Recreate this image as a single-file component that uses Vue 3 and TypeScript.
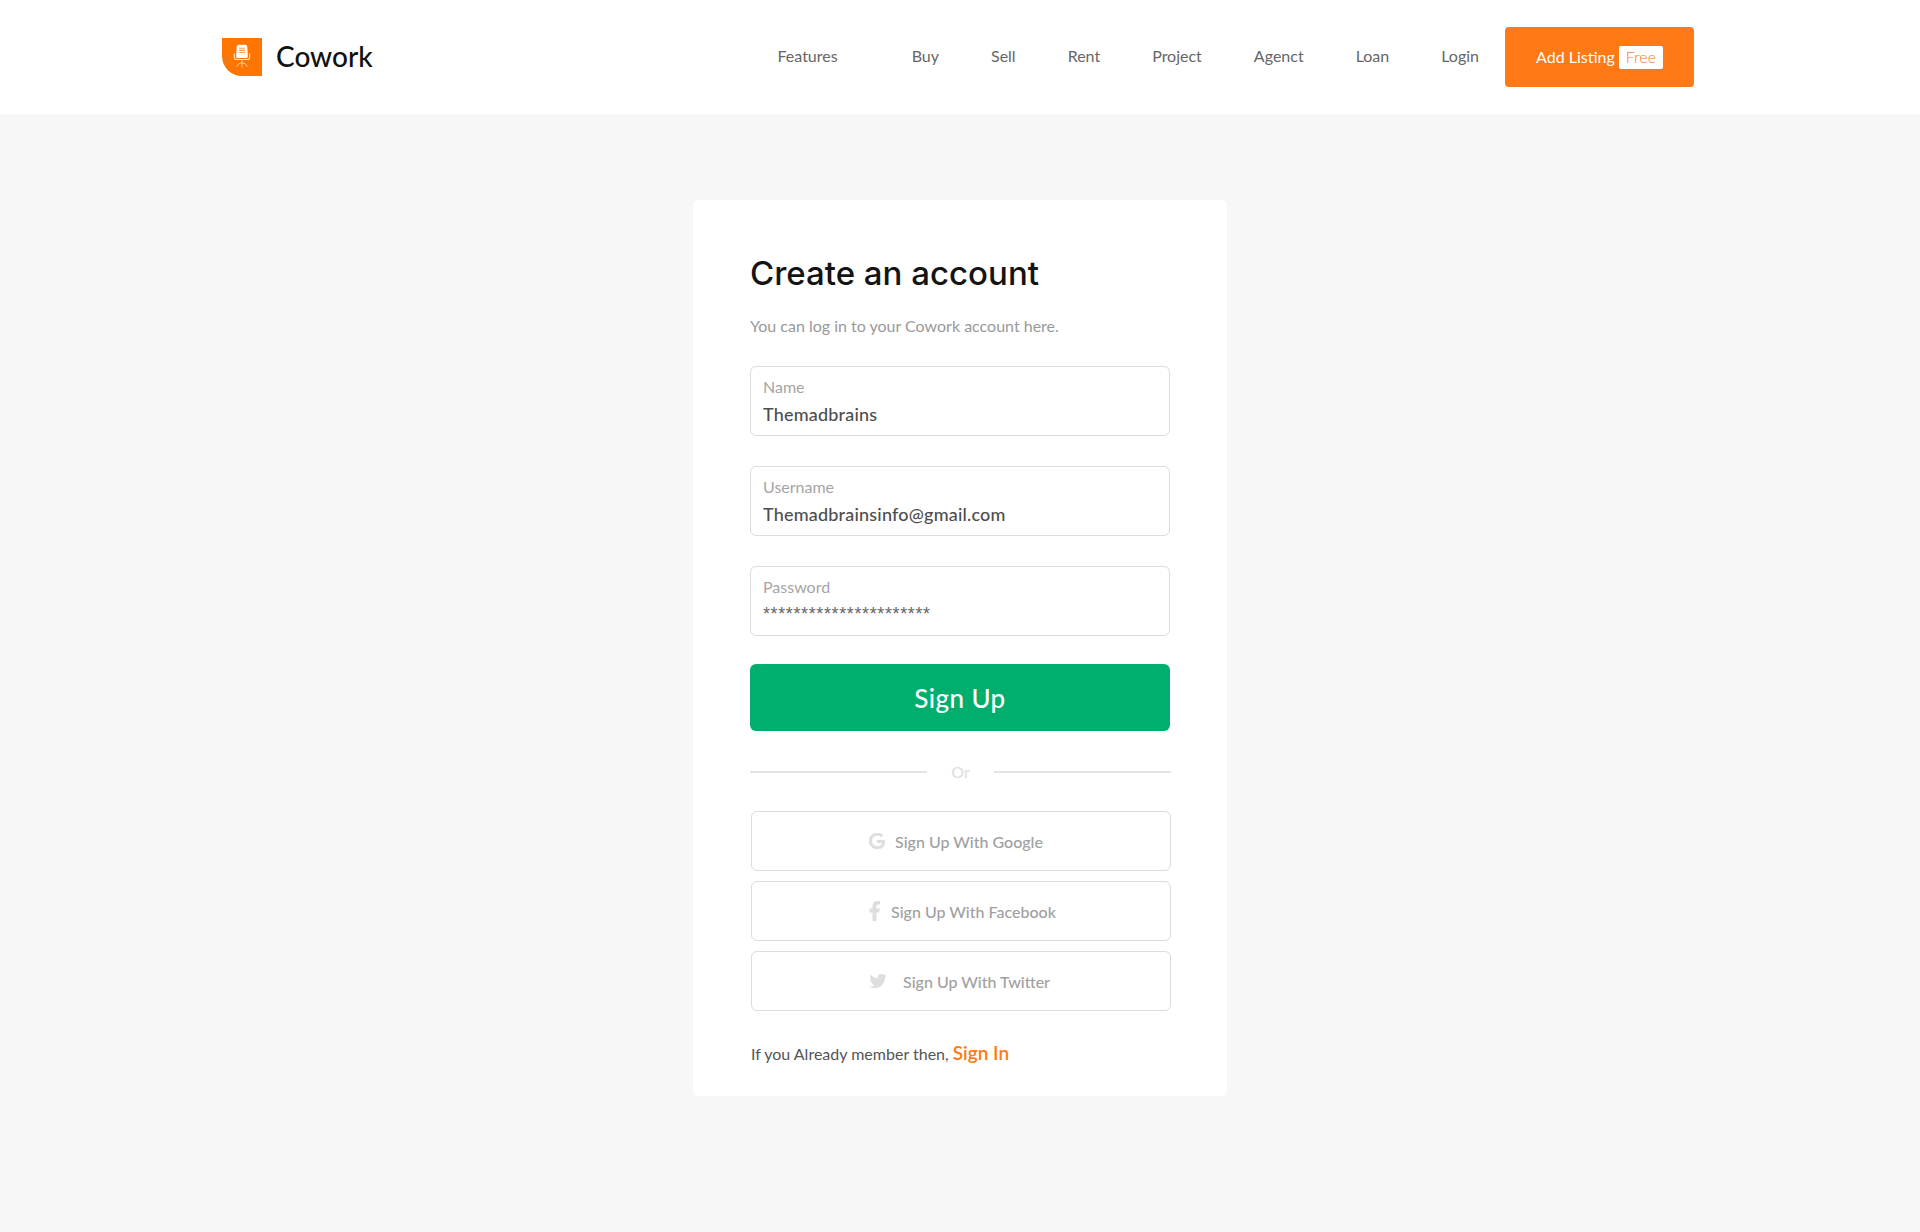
<template>
  <div class="page">
    <header class="topbar">
      <a class="brand" href="#">
        <span class="brand-mark">
          <svg width="18" height="26" viewBox="0 0 20 28" fill="none">
            <path d="M6.5 0.5h7c1.4 0 2.3 1 2.4 2.3l.6 10.700c.1 1-.6 1.700-1.600 1.700H5.100c-1 0-1.700-.7-1.600-1.700l.6-10.700C4.200 1.500 5.100.5 6.500.5z" fill="#fff" />
            <path d="M6.800 4.200h6.400M6.800 6.600h6.400M6.800 9h6.400" stroke="#ff9a4d" stroke-width="1.200" />
            <path d="M1.500 10v4.200c0 1.600 1 2.600 2.600 2.600h11.800c1.600 0 2.600-1 2.600-2.600V10" stroke="#fff" stroke-width="1.200" opacity=".85" />
            <path d="M10 17v3.500M10 20.500c-3 0-5 1.500-5.500 4.500M10 20.500c3 0 5 1.500 5.500 4.500M10 20.500V26" stroke="#fff" stroke-width="1" opacity=".7" />
          </svg>
        </span>
        <span class="brand-name">Cowork</span>
      </a>
      <nav class="menu">
        <a v-for="item in menu" :key="item" href="#" class="menu-link">{{ item }}</a>
      </nav>
      <a class="add-listing" href="#"><span class="add-text">Add Listing</span> <span class="free">Free</span></a>
    </header>

    <main class="content">
      <section class="card">
        <h1 class="title">Create an account</h1>
        <p class="lead">You can log in to your Cowork account here.</p>

        <form class="form" @submit.prevent>
          <label v-for="field in fields" :key="field.label" class="field">
            <span class="field-label">{{ field.label }}</span>
            <input class="field-input" :class="{ secret: field.secret }" type="text" v-model="field.value" />
          </label>
          <button class="submit" type="submit">Sign Up</button>
        </form>

        <div class="divider"><span>Or</span></div>

        <div class="socials">
          <a class="social" href="#">
            <svg class="icon icon-g" width="16" height="16" viewBox="0 0 24 24"><path d="M12.480 10.920v3.280h7.840c-.240 1.840-.853 3.187-1.787 4.133-1.147 1.147-2.933 2.400-6.053 2.400-4.827 0-8.600-3.893-8.600-8.720s3.773-8.720 8.600-8.720c2.600 0 4.507 1.027 5.907 2.347l2.307-2.307C18.747 1.440 16.133 0 12.480 0 5.867 0 .307 5.387.307 12s5.560 12 12.173 12c3.573 0 6.267-1.173 8.373-3.360 2.160-2.160 2.840-5.213 2.840-7.667 0-.760-.053-1.467-.173-2.053H12.480z" fill="#dedede" stroke="#dedede" stroke-width="1.500" /></svg>
            Sign Up With Google
          </a>
          <a class="social" href="#">
            <svg class="icon icon-f" width="11" height="20" viewBox="6.500 2 11 20" preserveAspectRatio="none"><path d="M14 13.500h2.500l1-4H14v-2c0-1.030 0-2 2-2h1.500V2.140c-.326-.043-1.557-.140-2.857-.140C11.928 2 10 3.657 10 6.700v2.800H7v4h3V22h4v-8.500z" fill="#dedede" /></svg>
            Sign Up With Facebook
          </a>
          <a class="social" href="#">
            <svg class="icon icon-t" width="18" height="16" viewBox="0 1 24 22"><path d="M23.953 4.570a10 10 0 01-2.825.775 4.958 4.958 0 002.163-2.723c-.951.555-2.005.959-3.127 1.184a4.920 4.920 0 00-8.384 4.482C7.690 8.095 4.067 6.130 1.640 3.162a4.822 4.822 0 00-.666 2.475c0 1.710.870 3.213 2.188 4.096a4.904 4.904 0 01-2.228-.616v.060a4.923 4.923 0 003.946 4.827 4.996 4.996 0 01-2.212.085 4.936 4.936 0 004.604 3.417 9.867 9.867 0 01-6.102 2.105c-.390 0-.779-.023-1.170-.067a13.995 13.995 0 007.557 2.209c9.053 0 13.998-7.496 13.998-13.985 0-.210 0-.420-.015-.630A9.935 9.935 0 0024 4.590z" fill="#dedede" /></svg>
            Sign Up With Twitter
          </a>
        </div>

        <p class="signin">If you Already member then, <a href="#">Sign In</a></p>
      </section>
    </main>
  </div>
</template>

<script setup lang="ts">
import { reactive } from 'vue'

const menu: string[] = ['Features', 'Buy', 'Sell', 'Rent', 'Project', 'Agenct', 'Loan', 'Login']

const fields = reactive([
  { label: 'Name', value: 'Themadbrains', secret: false },
  { label: 'Username', value: 'Themadbrainsinfo@gmail.com', secret: false },
  { label: 'Password', value: '**********************', secret: true }
])
</script>

<style scoped>
.page {
  min-height: 1232px;
  box-sizing: border-box;
  background: #f7f7f7;
  font-family: Lato, 'Liberation Sans', sans-serif;
  color: #555;
}

a {
  text-decoration: none;
}

.topbar {
  height: 114px;
  box-sizing: border-box;
  padding: 0 226px 0 222px;
  background: #fff;
  display: flex;
  align-items: center;
}

.brand {
  display: flex;
  align-items: center;
  gap: 14px;
  margin-right: auto;
}

.brand-mark {
  width: 40px;
  height: 38px;
  background: #ff7500;
  border-bottom-left-radius: 20px;
  display: flex;
  align-items: center;
  justify-content: center;
}

.brand-name {
  font-size: 28px;
  font-weight: 500;
  color: #111;
  margin-bottom: 2px;
}

.menu {
  display: flex;
  gap: 52px;
  margin-bottom: 3px;
}

.menu-link {
  font-size: 16px;
  color: #666;
}

.menu-link:first-child {
  margin-right: 22px;
}

.add-listing {
  margin-left: 26px;
  width: 189px;
  height: 60px;
  border-radius: 4px;
  background: #ff7a14;
  color: #fff;
  font-size: 16px;
  display: flex;
  align-items: center;
  justify-content: center;
  gap: 4px;
}

.add-text {
  margin-bottom: 2px;
}

.free {
  background: #fff;
  color: #ff7a14;
  border-radius: 2px;
  padding: 1px 7px 3px;
  font-weight: 300;
}

.content {
  display: flex;
  justify-content: center;
  padding-top: 86px;
}

.card {
  width: 534px;
  height: 896px;
  box-sizing: border-box;
  padding: 52px 57px 0;
  background: #fff;
  border-radius: 6px;
}

.title {
  margin: 0;
  font-family: Inter, Lato, sans-serif;
  font-size: 33px;
  line-height: 42px;
  font-weight: 500;
  color: #141414;
}

.lead {
  margin: 22px 0 0;
  font-size: 16px;
  line-height: 20px;
  color: #999;
}

.form {
  margin-top: 30px;
  display: flex;
  flex-direction: column;
  gap: 30px;
}

.field {
  height: 70px;
  box-sizing: border-box;
  padding: 10px 12px 0;
  border: 1px solid #ddd;
  border-radius: 6px;
  display: block;
}

.field-label {
  display: block;
  font-size: 16px;
  line-height: 20px;
  color: #a5a5a5;
}

.field-input {
  display: block;
  width: 100%;
  margin-top: 6px;
  padding: 0;
  border: 0;
  outline: 0;
  font-family: inherit;
  font-size: 18px;
  line-height: 22px;
  font-weight: 500;
  letter-spacing: 0.2px;
  color: #4d4d4d;
}

.field-input.secret {
  font-family: 'Liberation Sans', sans-serif;
  font-size: 18px;
  font-weight: 400;
  letter-spacing: 0.62px;
  color: #666;
}

.submit {
  height: 67px;
  margin-top: -2px;
  border: 0;
  border-radius: 6px;
  background: #00ae6e;
  color: #fff;
  font-family: inherit;
  font-size: 26px;
  font-weight: 500;
  letter-spacing: 0.4px;
}

.divider {
  margin: 31px -1px 0 0;
  display: flex;
  align-items: center;
  justify-content: center;
  height: 20px;
  gap: 24px;
  font-size: 16px;
  color: #ddd;
}

.divider span {
  margin-top: -2px;
}

.divider::before,
.divider::after {
  content: '';
  flex: 1;
  height: 2px;
  background: #e4e4e4;
}

.socials {
  margin: 29px -1px 0 1px;
  display: flex;
  flex-direction: column;
  gap: 10px;
}

.social {
  height: 60px;
  box-sizing: border-box;
  padding-left: 117px;
  border: 1px solid #ddd;
  border-radius: 6px;
  display: flex;
  align-items: center;
  font-size: 16px;
  font-weight: 500;
  color: #a0a0a0;
}

.icon-g {
  margin-right: 10px;
}

.icon-f {
  margin-right: 11px;
}

.icon-t {
  margin-right: 16px;
}

.signin {
  margin: 30px 0 0 1px;
  font-size: 16px;
  color: #555;
}

.signin a {
  font-size: 19px;
  font-weight: 600;
  color: #ff7a14;
}
</style>
